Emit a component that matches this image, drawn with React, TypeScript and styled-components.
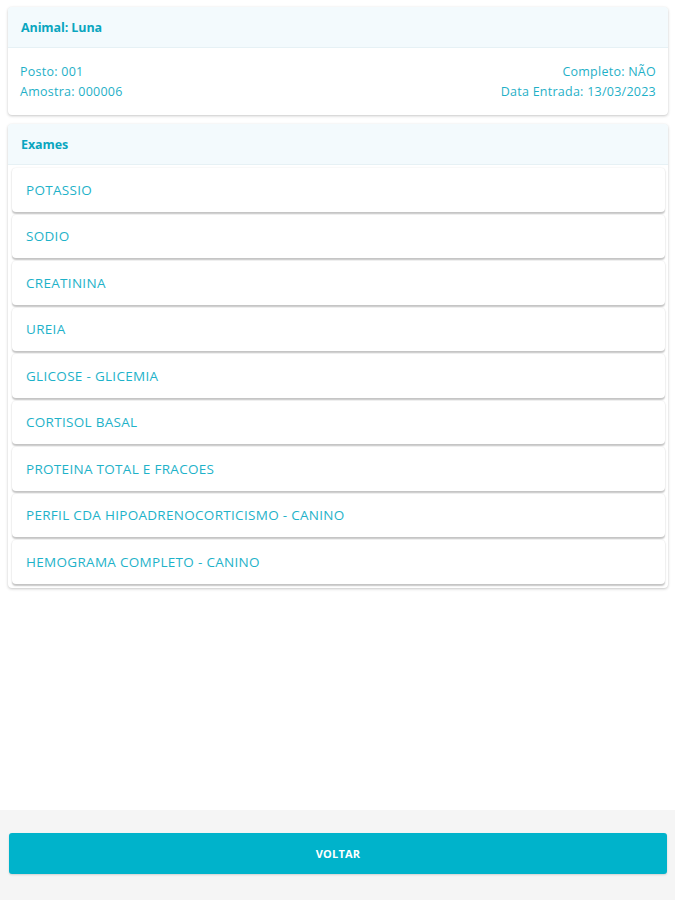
import React from "react";
import styled, { createGlobalStyle } from "styled-components";

const Global = createGlobalStyle`
  html, body { margin: 0; padding: 0; background: #ffffff; }
  body { font-family: "Open Sans", "Noto Sans", sans-serif; }
  * { box-sizing: border-box; }
`;

const Page = styled.div`
  height: 900px;
  display: flex;
  flex-direction: column;
  background: #ffffff;
`;

const Content = styled.div`
  flex: 1;
  padding: 7px 7px 0 8px;
  display: flex;
  flex-direction: column;
  gap: 9px;
`;

const Card = styled.section`
  background: #ffffff;
  border-radius: 4px;
  box-shadow: 0 1px 3px rgba(0, 0, 0, 0.22), 0 0 1px rgba(0, 0, 0, 0.06);
  overflow: hidden;
`;

const CardHeader = styled.header`
  height: 41px;
  display: flex;
  align-items: center;
  padding: 0 13px;
  background: #f3fafd;
  border-bottom: 1px solid #e6f1f5;
  color: #0aa6bf;
  font-size: 12.5px;
  font-weight: 700;
  letter-spacing: -0.1px;
`;

const InfoBody = styled.div`
  display: flex;
  justify-content: space-between;
  padding: 16px 12px 15px 12px;
`;

const InfoCol = styled.div<{ $right?: boolean }>`
  display: flex;
  flex-direction: column;
  gap: 4px;
  align-items: ${(p) => (p.$right ? "flex-end" : "flex-start")};
  color: #1fb0c7;
  font-size: 12.5px;
  letter-spacing: 0.25px;
  line-height: 16px;
`;

const List = styled.div`
  display: flex;
  flex-direction: column;
  gap: 3px;
  padding: 3px 3px 4px 4px;
`;

const Item = styled.div`
  height: 43.5px;
  display: flex;
  align-items: center;
  padding: 0 14px;
  background: #ffffff;
  border-radius: 4px;
  box-shadow: 0 1.5px 1.5px rgba(0, 0, 0, 0.22), 0 0 2px rgba(0, 0, 0, 0.08);
  color: #1eb2c9;
  font-size: 13.5px;
  letter-spacing: 0.3px;
`;

const Footer = styled.footer`
  height: 90px;
  background: #f5f5f5;
  padding: 23px 8px 0 9px;
`;

const Button = styled.button`
  width: 100%;
  height: 41px;
  border: none;
  border-radius: 3px;
  background: #00b3cb;
  box-shadow: 0 1px 2px rgba(0, 0, 0, 0.15);
  color: #ffffff;
  font-family: "Open Sans", "Noto Sans", sans-serif;
  font-size: 11px;
  font-weight: 700;
  letter-spacing: 0.2px;
  cursor: pointer;
`;

const exames = [
  "POTASSIO",
  "SODIO",
  "CREATININA",
  "UREIA",
  "GLICOSE - GLICEMIA",
  "CORTISOL BASAL",
  "PROTEINA TOTAL E FRACOES",
  "PERFIL CDA HIPOADRENOCORTICISMO - CANINO",
  "HEMOGRAMA COMPLETO - CANINO",
];

export default function App() {
  return (
    <Page>
      <Global />
      <Content>
        <Card>
          <CardHeader>Animal: Luna</CardHeader>
          <InfoBody>
            <InfoCol>
              <span>Posto: 001</span>
              <span>Amostra: 000006</span>
            </InfoCol>
            <InfoCol $right>
              <span>Completo: NÃO</span>
              <span>Data Entrada: 13/03/2023</span>
            </InfoCol>
          </InfoBody>
        </Card>
        <Card>
          <CardHeader>Exames</CardHeader>
          <List>
            {exames.map((e) => (
              <Item key={e}>{e}</Item>
            ))}
          </List>
        </Card>
      </Content>
      <Footer>
        <Button>VOLTAR</Button>
      </Footer>
    </Page>
  );
}
